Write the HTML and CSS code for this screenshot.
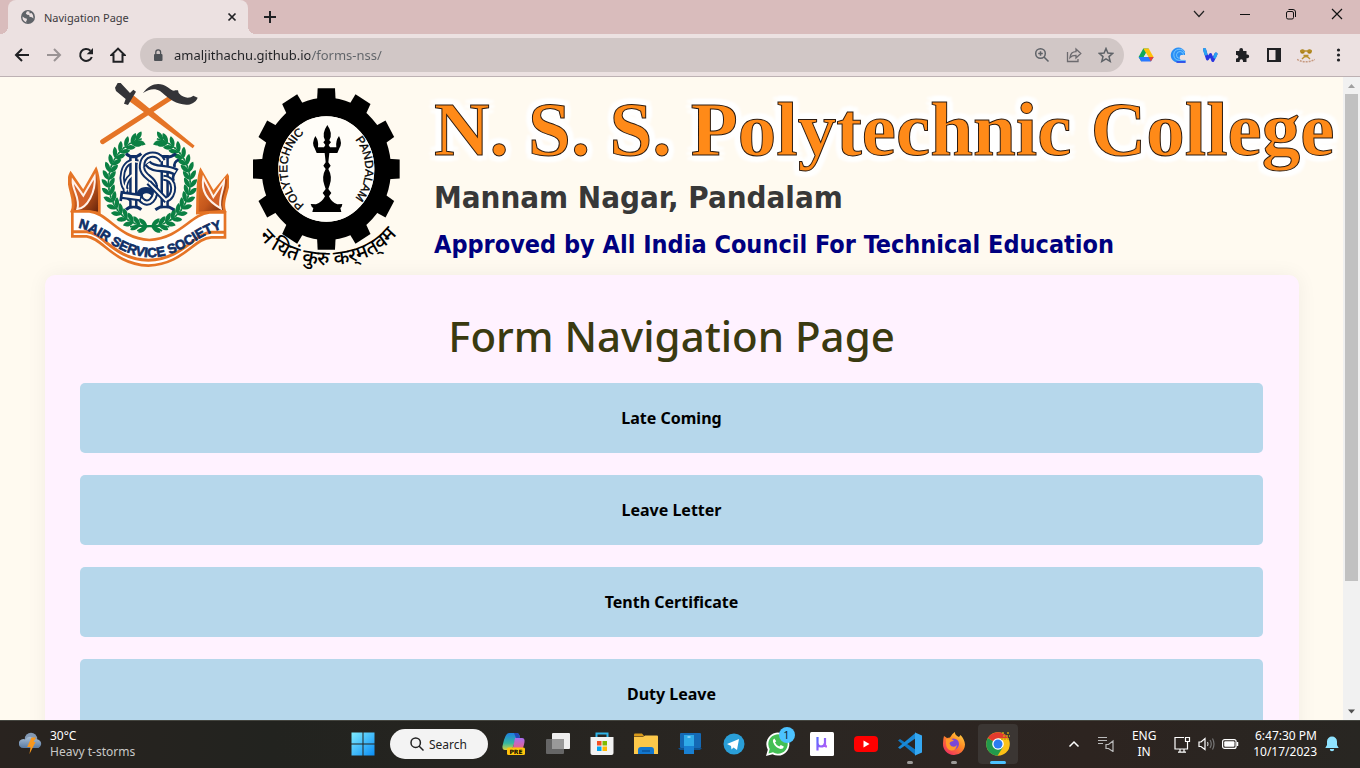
FILE: index.html
```html
<!DOCTYPE html>
<html lang="en">
<head>
<meta charset="utf-8">
<title>Navigation Page</title>
<link rel="stylesheet" href="styles.css">
</head>
<body>
<header class="tabstrip">
  <div class="tab">
    <svg class="favicon" viewBox="0 0 14 14"><circle cx="7" cy="7" r="7" fill="#5f6368"/><path d="M1.5 6.5 4 8.2l1.6.3.4 1.6-1 1.2.6 1.2A6 6 0 0 1 1.5 6.5zM6 1.3 4.8 3.6l1.4 1.2 2 .2.3 1.8 2.4.4 1.6 1.3a6 6 0 0 0-2-5.4L8.6 3.400 8.400 1.500z" fill="#ece1e1"/></svg>
    <span class="tab-title">Navigation Page</span>
    <button class="tab-close" aria-label="Close tab"><svg width="10" height="10" viewBox="0 0 10 10"><path d="M1.500 1.500l7 7M8.500 1.500l-7 7" stroke="#202124" stroke-width="1.700"/></svg></button>
  </div>
  <button class="new-tab" aria-label="New tab"><svg width="12" height="12" viewBox="0 0 12 12"><path d="M6 0v12M0 6h12" stroke="#202124" stroke-width="2"/></svg></button>
  <div class="window-controls">
    <button class="win" aria-label="Search tabs"><svg width="12" height="12" viewBox="0 0 12 12"><path d="M1 3l5 5.500L11 3" fill="none" stroke="#222" stroke-width="1.200"/></svg></button>
    <button class="win" aria-label="Minimize"><svg width="12" height="12" viewBox="0 0 12 12"><path d="M1 6.500h10" stroke="#111"/></svg></button>
    <button class="win" aria-label="Restore"><svg width="12" height="12" viewBox="0 0 12 12"><rect x="1.500" y="3.500" width="7" height="7.500" rx="1.500" fill="none" stroke="#111"/><path d="M3.500 1.500h4.500q2.500 0 2.500 2.500v5" fill="none" stroke="#111"/></svg></button>
    <button class="win" aria-label="Close"><svg width="12" height="12" viewBox="0 0 12 12"><path d="M1 1l10 10M11 1L1 11" stroke="#111" stroke-width="1.200"/></svg></button>
  </div>
</header>

<nav class="toolbar">
  <button class="tool" aria-label="Back"><svg width="16" height="16" viewBox="0 0 16 16"><path d="M15 8H2.500M8 2L2 8l6 6" fill="none" stroke="#202124" stroke-width="2"/></svg></button>
  <button class="tool" aria-label="Forward"><svg width="16" height="16" viewBox="0 0 16 16"><path d="M1 8h12.500M8 2l6 6-6 6" fill="none" stroke="#9a9394" stroke-width="2"/></svg></button>
  <button class="tool" aria-label="Reload"><svg width="16" height="16" viewBox="0 0 16 16"><path d="M13.800 10A6 6 0 1 1 12.400 3.700" fill="none" stroke="#202124" stroke-width="2"/><path d="M15 1v6.300H8.700z" fill="#202124"/></svg></button>
  <button class="tool" aria-label="Home"><svg width="16" height="16" viewBox="0 0 16 16"><path d="M8 1.600L1.500 8h2v6.800h9V8h2z" fill="none" stroke="#202124" stroke-width="2"/></svg></button>
  <div class="omnibox">
    <svg class="lock" viewBox="0 0 10 13"><rect x="1" y="5" width="8.500" height="7" rx="1" fill="#4d5156"/><path d="M2.800 5.500V3.200a2.400 2.400 0 0 1 4.800 0v2.300" fill="none" stroke="#4d5156" stroke-width="1.300"/></svg>
    <input class="address" type="text" aria-label="Address" value="amaljithachu.github.io/forms-nss/">
    <button class="tool" aria-label="Zoom"><svg width="16" height="16" viewBox="0 0 16 16"><g fill="none" stroke="#5f6368" stroke-width="1.500"><circle cx="6.500" cy="6.500" r="4.800"/><path d="M10 10l4.500 4.500M6.500 4.200v4.600M4.200 6.500h4.600"/></g></svg></button>
    <button class="tool" aria-label="Share"><svg width="16" height="16" viewBox="0 0 16 16"><path d="M1.500 5v9.500H12V12M4 10.500c.5-4 3-5.800 6-5.800V2l4.800 4.500L10 11V8.300c-2.500 0-4.500.4-6 2.200z" fill="none" stroke="#6c6a6e" stroke-width="1.300"/></svg></button>
    <button class="tool" aria-label="Bookmark"><svg width="16" height="16" viewBox="0 0 16 16"><path d="M8 1.500l1.900 4.500 4.800.4-3.700 3.200 1.200 4.800L8 11.800l-4.200 2.600L5 9.600 1.300 6.400l4.800-.4z" fill="none" stroke="#5f6368" stroke-width="1.500"/></svg></button>
  </div>
  <div class="extensions">
    <button class="tool" aria-label="Drive"><svg width="16" height="16" viewBox="0 0 16 16"><path d="M5.300 1.500h5.400L8 6.200 3.300 14.500.6 10z" fill="#0fa958"/><path d="M5.300 1.500h5.400l5 8.700h-5.200z" fill="#ffc107"/><path d="M.6 10h0L3.300 14.500h9.600L15.600 10H5.700z" fill="#2979ff"/><path d="M10.500 10h5.100l-2.700 4.500z" fill="#ea4335"/><path d="M8 6l2.300 4H5.700z" fill="#ece1e1"/></svg></button>
    <button class="tool" aria-label="Cloud extension"><svg width="16" height="16" viewBox="0 0 16 16"><path d="M15 4.500A7.600 7.600 0 1 0 8 15.800h7.500V13H11a3 3 0 0 1 0-5h4z" fill="#2a8ff5"/><path d="M14.500 6A5.500 5.500 0 1 0 9 13.300h6M13.500 8A3.500 3.500 0 1 0 9.500 11.500" fill="none" stroke="#86d2ff" stroke-width=".8"/><path d="M6.500 15h9" stroke="#3047e8" stroke-width="1.600"/></svg></button>
    <button class="tool" aria-label="Word helper"><svg width="16" height="16" viewBox="0 0 16 16"><path d="M2.500 2.500L5.500 12l3-4.500 2.300 6L14 7" fill="none" stroke="#2a35e0" stroke-width="3" stroke-linejoin="round" stroke-linecap="round"/><path d="M2.500 2.500l1.300 4.500M12.800 10L14 7" stroke="#28a4f0" stroke-width="3" stroke-linecap="round"/></svg></button>
    <button class="tool" aria-label="Extensions"><svg width="16" height="16" viewBox="0 0 16 16"><path d="M2 4h3.300V3a1.900 1.900 0 0 1 3.800 0v1h3.400v3.400h.8a1.900 1.900 0 0 1 0 3.800h-.8V15H9v-1a1.700 1.700 0 0 0-3.400 0v1H2v-3.400h.6a1.700 1.700 0 0 0 0-3.500H2z" fill="#202124"/></svg></button>
    <button class="tool" aria-label="Side panel"><svg width="16" height="16" viewBox="0 0 16 16"><path d="M1 1h14v14H1zM3 3v10h6.500V3z" fill="#202124" fill-rule="evenodd"/></svg></button>
    <button class="tool" aria-label="Profile"><svg width="18" height="16" viewBox="0 0 18 16"><g fill="#a87f16"><circle cx="5.500" cy="4.500" r="2.300"/><circle cx="12.500" cy="4.500" r="2.300"/></g><path d="M5 12q4-5 8 0M3 4h12M6.500 8.500h5" fill="none" stroke="#b8902a" stroke-width="1.300"/><path d="M0 12.500q9 4.500 18 0" fill="none" stroke="#c69a80" stroke-width="1.500" stroke-dasharray="2 1"/></svg></button>
    <button class="tool" aria-label="Menu"><svg width="16" height="16" viewBox="0 0 16 16"><g fill="#202124"><circle cx="8.500" cy="3" r="1.600"/><circle cx="8.500" cy="8" r="1.600"/><circle cx="8.500" cy="13" r="1.600"/></g></svg></button>
  </div>
</nav>

<div class="viewport">
  <main class="page">
    <section class="banner">
      <svg class="emblem" viewBox="54 21 483 555" role="img" aria-label="Nair Service Society">
        <defs>
          <linearGradient id="fold" x1="0" y1="0" x2="1" y2="1"><stop offset="0" stop-color="#ee7a2c"/><stop offset=".55" stop-color="#c4571c"/><stop offset="1" stop-color="#5e1f0a"/></linearGradient>
          <path id="leaf" d="M-2-1C6-16 20-17 27-14C25-4 12 4-2-1z" fill="#0b8043"/>
          <g id="sprig"><g transform="translate(0 -122)"><use href="#leaf" transform="rotate(-12)"/><use href="#leaf" transform="scale(1 -1) rotate(-12)"/><path d="M-8 0H18" stroke="#0b8043" stroke-width="4"/></g></g>
          <g id="branch">
            <use href="#sprig" transform="rotate(184)"/><use href="#sprig" transform="rotate(194)"/><use href="#sprig" transform="rotate(204)"/><use href="#sprig" transform="rotate(214)"/><use href="#sprig" transform="rotate(224)"/><use href="#sprig" transform="rotate(234)"/><use href="#sprig" transform="rotate(244)"/><use href="#sprig" transform="rotate(254)"/><use href="#sprig" transform="rotate(264)"/><use href="#sprig" transform="rotate(274)"/><use href="#sprig" transform="rotate(284)"/><use href="#sprig" transform="rotate(294)"/><use href="#sprig" transform="rotate(304)"/><use href="#sprig" transform="rotate(314)"/><use href="#sprig" transform="rotate(324)"/><use href="#sprig" transform="rotate(334)"/><use href="#sprig" transform="rotate(341)"/>
          </g>
          <path id="motto" d="M76 458C140 460 195 542 300 547C400 545 445 474 524 460"/>
        </defs>
        <path d="M158 200L372 62" stroke="#e57426" stroke-width="15" stroke-linecap="round"/>
        <path d="M240 65L252 62L434 212L428 220L240 80z" fill="#e57426"/>
        <path d="M195 38L203 24L212 24L240 54L250 44L258 50L250 64L234 90L222 86L227 72L198 48z" fill="#343438"/>
        <path d="M279 54C300 24 330 20 352 36C364 44 370 50 376 46L384 46L386 54C402 72 420 70 430 62L443 68C436 86 416 92 398 88C370 84 350 64 330 48C312 38 296 44 279 54z" fill="#343438"/>
        <g transform="translate(298 322) scale(1 1.080)"><use href="#branch"/><use href="#branch" transform="scale(-1 1)"/></g>
        <path d="M262 468Q300 440 336 468M240 455Q300 450 358 455" fill="none" stroke="#0b8043" stroke-width="5"/>
        <g fill="none">
          <g stroke="#0f2f66">
            <path d="M264 262C214 244 204 330 232 346M246 300C214 326 222 372 254 376" stroke-width="16"/>
            <path d="M250 240V400M344 240V400" stroke-width="25"/>
            <path d="M228 236Q250 256 274 236M228 404Q250 384 274 404M320 236Q350 258 378 236M316 404Q344 384 372 404" stroke-width="9"/>
          </g>
          <g stroke="#fffaf0">
            <path d="M264 262C214 244 204 330 232 346M246 300C214 326 222 372 254 376" stroke-width="5"/>
            <path d="M250 250V392M344 250V392" stroke-width="10"/>
          </g>
          <path d="M338 258C324 228 274 232 276 278C278 306 310 308 314 332C322 368 296 400 272 372C258 342 300 336 316 362" stroke="#0f2f66" stroke-width="19"/>
          <path d="M338 258C324 228 274 232 276 278C278 306 310 308 314 332C322 368 296 400 272 372" stroke="#fffaf0" stroke-width="7"/>
          <path d="M296 322L350 378M340 308C380 310 376 366 348 374" stroke="#0f2f66" stroke-width="18"/>
          <path d="M296 322L350 378M340 308C380 310 376 366 348 374" stroke="#fffaf0" stroke-width="6"/>
          <path d="M292 264C310 288 350 274 380 292M212 360L274 368" stroke="#0f2f66" stroke-width="23"/>
          <path d="M294 266C310 288 350 274 376 290M216 361L270 368" stroke="#fffaf0" stroke-width="9"/>
          <path d="M374 276Q370 262 386 254M372 296Q366 312 372 318M216 348L212 378" stroke="#0f2f66" stroke-width="8"/>
        </g>
        <path d="M62 295L100 350L138 283C150 315 148 360 148 414L66 408C82 372 44 330 62 295z" fill="url(#fold)" stroke="#e57426" stroke-width="8"/>
        <path d="M68 316L100 362L134 304C138 350 112 400 82 402C92 370 66 345 68 316z" fill="#d4622a" stroke="#fff1ea" stroke-width="6"/>
        <path d="M532 302L490 352L452 286C440 320 444 360 442 414L524 408C510 372 548 330 532 302z" fill="url(#fold)" stroke="#e57426" stroke-width="8"/>
        <path d="M522 318L490 366L460 308C452 350 476 380 512 400C504 370 522 345 522 318z" fill="#d4622a" stroke="#fff1ea" stroke-width="6"/>
        <path d="M67 409H118C175 414 205 490 298 495C390 490 420 420 478 412H525V487H484C430 490 400 568 295 572C190 568 160 490 110 484H67z" fill="#fff" stroke="#e57426" stroke-width="8"/>
        <path d="M67 470H110C160 474 190 552 295 556C400 552 430 476 484 472H525" fill="none" stroke="#e57426" stroke-width="9"/>
        <text class="emblem-text"><textPath href="#motto" startOffset="50%" text-anchor="middle">NAIR SERVICE SOCIETY</textPath></text>
      </svg>
      <svg class="gear" viewBox="39 21 438 576" role="img" aria-label="Polytechnic Pandalam">
        <defs>
          <path id="rim" d="M259 412A117 130 0 0 1 259 152A117 130 0 0 1 259 412"/>
          <path id="under" d="M38 456C110 602 396 618 490 450"/>
          <path id="tooth" d="M-28-185L-26-220H26L28-185z"/>
        </defs>
        <g transform="translate(259 282) scale(1 1.100)">
          <circle r="169" fill="none" stroke="#000" stroke-width="50"/>
          <use href="#tooth"/><use href="#tooth" transform="rotate(30)"/><use href="#tooth" transform="rotate(60)"/><use href="#tooth" transform="rotate(90)"/><use href="#tooth" transform="rotate(120)"/><use href="#tooth" transform="rotate(150)"/><use href="#tooth" transform="rotate(180)"/><use href="#tooth" transform="rotate(210)"/><use href="#tooth" transform="rotate(240)"/><use href="#tooth" transform="rotate(270)"/><use href="#tooth" transform="rotate(300)"/><use href="#tooth" transform="rotate(330)"/>
          <circle r="144" fill="#fffdf8"/>
        </g>
        <text class="gear-text"><textPath href="#rim" startOffset="25%" text-anchor="middle">POLYTECHNIC</textPath></text>
        <text class="gear-text"><textPath href="#rim" startOffset="75%" text-anchor="middle">PANDALAM</textPath></text>
        <text class="gear-motto"><textPath href="#under" startOffset="50%" text-anchor="middle">न यितं कुरु कर्‌मत्‌वम</textPath></text>
        <path d="M262 150Q244 176 255 196L250 202L256 210L252 217H234Q237 198 226 183Q214 204 224 220L230 234H254L257 262L250 272L257 282Q244 305 253 330L257 342L248 354L255 364Q246 382 228 388L212 387Q214 396 220 399L217 411H304L301 399Q306 396 307 387L292 388Q274 382 267 364L274 354L265 342L269 330Q278 305 265 282L272 272L265 262L268 234H292L298 220Q308 204 297 183Q286 198 289 217H270L266 210L273 202L268 196Q280 176 262 150z"/>
      </svg>
      <div class="banner-text">
        <h1 class="college">N. S. S. Polytechnic College</h1>
        <p class="place">Mannam Nagar, Pandalam</p>
        <p class="approval">Approved by All India Council For Technical Education</p>
      </div>
    </section>
    <section class="card">
      <h2 class="card-title">Form Navigation Page</h2>
      <div class="links">
        <button class="form-link">Late Coming</button>
        <button class="form-link">Leave Letter</button>
        <button class="form-link">Tenth Certificate</button>
        <button class="form-link">Duty Leave</button>
      </div>
    </section>
  </main>
  <div class="scrollbar">
    <svg width="17" height="17" viewBox="0 0 17 17"><path d="M5 11L8.500 7L12 11z" fill="#a0a0a0"/></svg>
    <div class="track"><div class="thumb"></div></div>
    <svg width="17" height="17" viewBox="0 0 17 17"><path d="M5 6.500L8.500 10.500L12 6.500z" fill="#505050"/></svg>
  </div>
</div>

<footer class="taskbar">
  <div class="weather">
    <svg width="24" height="24" viewBox="0 0 24 24"><defs><linearGradient id="cl" x2="0" y2="1"><stop offset="0" stop-color="#a9bfd6"/><stop offset="1" stop-color="#5a7ba3"/></linearGradient></defs><circle cx="12" cy="7" r="6.200" fill="#8298b3"/><path d="M4.500 16a4.500 4.500 0 1 1 2-8.400 5 5 0 0 1 9 0A4.500 4.500 0 1 1 19.500 16z" fill="url(#cl)"/><path d="M12.500 5.500h4.500L14.500 10h2L10.500 22l1-7H8.200z" fill="#f8971d"/></svg>
    <div class="weather-text"><span>30°C</span><span class="dim">Heavy t-storms</span></div>
  </div>
  <div class="apps">
    <button class="app" aria-label="Start"><svg width="24" height="24" viewBox="0 0 24 24"><defs><linearGradient id="wn" x2="1" y2="1"><stop offset="0" stop-color="#7fecff"/><stop offset="1" stop-color="#0a8df5"/></linearGradient></defs><path d="M.5.5h11v11H.5zM12.500.5h11v11h-11zM.5 12.500h11v11H.5zM12.500 12.500h11v11h-11z" fill="url(#wn)"/></svg></button>
    <button class="search"><svg width="14" height="14" viewBox="0 0 14 14"><circle cx="5.700" cy="5.700" r="4.700" fill="none" stroke="#222" stroke-width="1.500"/><path d="M9 9l4.500 4.500" stroke="#222" stroke-width="1.500"/></svg>Search</button>
    <button class="app" aria-label="Copilot"><svg width="24" height="24" viewBox="0 0 24 24"><defs><linearGradient id="c1" x2="0" y2="1"><stop offset="0" stop-color="#1d7fe0"/><stop offset=".6" stop-color="#35b7a0"/><stop offset="1" stop-color="#d9d23c"/></linearGradient><linearGradient id="c2" x2="0" y2="1"><stop offset="0" stop-color="#a76cf0"/><stop offset="1" stop-color="#f0607c"/></linearGradient></defs><path d="M7 1h8q2 0 3 4l-4 1-3 9q-1 3-3 3H3q-3 0-2.500-4Q3 1 7 1z" fill="url(#c1)"/><path d="M13 6h7q3 0 2.500 4-1 6-3 8h-9z" fill="url(#c2)"/><path d="M12 1h3q2 0 3 5h-4z" fill="#2449b8"/><rect x="5" y="15.500" width="18" height="7.500" rx="1.500" fill="#ffc40c"/><text x="14" y="21.500" text-anchor="middle" class="pre">PRE</text></svg></button>
    <button class="app" aria-label="Task view"><svg width="24" height="24" viewBox="0 0 24 24"><rect x="6" y="1" width="18" height="16" rx="1" fill="#eee"/><rect x="0" y="7" width="18" height="15" rx="1" fill="#666"/><path d="M6 7h12v10H6z" fill="#999"/></svg></button>
    <button class="app" aria-label="Store"><svg width="24" height="24" viewBox="0 0 24 24"><path d="M6.500 5V1.500h11V5" fill="none" stroke="#2fb4e8" stroke-width="2"/><path d="M.5 5h23v16q0 2-2 2h-19q-2 0-2-2z" fill="#f2f2f2"/><path d="M7 9h4.500v4.500H7z" fill="#f25022"/><path d="M12.500 9H17v4.500h-4.500z" fill="#7fba00"/><path d="M7 14.500h4.500V19H7z" fill="#00a4ef"/><path d="M12.500 14.500H17V19h-4.500z" fill="#ffb900"/></svg></button>
    <button class="app" aria-label="File Explorer"><svg width="24" height="24" viewBox="0 0 24 24"><path d="M0 2.500q0-1 1-1h7l2.500 3H0z" fill="#d99a1a"/><path d="M0 5h9l2-1.500h12q1 0 1 1V22H0z" fill="#fcc84a"/><path d="M4 22v-4q0-3 3-3h10q3 0 3 3v4z" fill="#1277cf"/><path d="M8 19h8" stroke="#0b559c" stroke-width="1.500"/></svg></button>
    <button class="app" aria-label="Phone Link"><svg width="24" height="24" viewBox="0 0 24 24"><rect x="2" y="1" width="21" height="15" rx="1" fill="#1469b5"/><path d="M0 16h24l-2 2H2z" fill="#0e5290"/><path d="M6 3h10v19H6z" fill="#2faae8"/><path d="M6 14h10v8H6z" fill="#1980d2"/><path d="M9.500 5h3" stroke="#d5f2ff" stroke-width="1"/></svg></button>
    <button class="app" aria-label="Telegram"><svg width="24" height="24" viewBox="0 0 24 24"><circle cx="12" cy="12" r="10.500" fill="#2a9fd8"/><path d="M5 12l12-5-2 11-3.500-2.500-2 2-.5-3.500z" fill="#fff"/></svg></button>
    <button class="app whatsapp" aria-label="WhatsApp"><svg width="24" height="24" viewBox="0 0 24 24"><path d="M0 24l1.800-6.300A11.500 11.500 0 1 1 6.500 22.300z" fill="#fff"/><path d="M2.500 21.500l1.200-4.500A9.700 9.700 0 1 1 7 20.300z" fill="#44bf55"/><path d="M8.300 6.500q-2 1-1.300 3.500 2 5.500 7.500 7 3 0 3.300-2.500l-3-1.500-1.500 1.500q-3-1-4.300-4l1.200-1.300z" fill="#fff"/></svg><span class="badge">1</span></button>
    <button class="app" aria-label="uTorrent"><svg width="24" height="24" viewBox="0 0 24 24"><defs><linearGradient id="mu" x2="1" y2="1"><stop offset="0" stop-color="#5468ff"/><stop offset="1" stop-color="#c95cf5"/></linearGradient></defs><rect width="24" height="24" rx="1.500" fill="#fff"/><path d="M7.500 5v13.500M7.500 6v5q0 3.500 3.500 3.500t4-3.500V6v7q0 1.500 2 1.500" fill="none" stroke="url(#mu)" stroke-width="2.200"/></svg></button>
    <button class="app" aria-label="YouTube"><svg width="24" height="24" viewBox="0 0 24 24"><rect y="4" width="24" height="16" rx="4" fill="#f00"/><path d="M9.500 8.500l6 3.500-6 3.500z" fill="#fff"/></svg></button>
    <button class="app running" aria-label="Visual Studio Code"><svg width="24" height="24" viewBox="0 0 24 24"><path d="M0 8.500L2 7l16 11v5.500z" fill="#0f78c4"/><path d="M0 15.500L2 17 18 6V.5z" fill="#1a8ad8"/><path d="M17 .5l7 3v17l-7 3z" fill="#35a8f2"/></svg></button>
    <button class="app running" aria-label="Firefox"><svg width="24" height="24" viewBox="0 0 24 24"><defs><linearGradient id="ff" x1="1" y1="0" x2=".3" y2="1"><stop offset="0" stop-color="#ffe14a"/><stop offset=".5" stop-color="#ff8a24"/><stop offset="1" stop-color="#f0325e"/></linearGradient></defs><path d="M2 4l3 2 3-.5q2-4 5-5.500-.5 3 4 5l1.500-2q4 4 4.500 9.500a11 11 0 1 1-22-1Q1 7 2 4z" fill="url(#ff)"/><circle cx="11.500" cy="12" r="5.500" fill="#7a48d8"/><path d="M4 7q6-1 8 2-4 0-4.500 2.500L9 14q4 2 6-1-1 6-6 5.500-5-1-5-7z" fill="#ff9a28"/></svg></button>
    <button class="app active" aria-label="Chrome"><svg width="24" height="24" viewBox="0 0 24 24"><circle cx="12" cy="12" r="11.800" fill="#fbc116"/><path d="M1.800 6A11.800 11.800 0 0 0 11.500 23.800L17 15l-5-3z" fill="#229a4c"/><path d="M12 12L1.800 6A11.800 11.800 0 0 1 22.200 6.200H12z" fill="#e33b2e"/><circle cx="12" cy="12" r="5.800" fill="#fff"/><circle cx="12" cy="12" r="4.500" fill="#2b7cf0"/><path d="M16 1h3M21 1h3M17 4h7M15 7h8" stroke="#c9a012" stroke-width="1.700" stroke-dasharray="2 1"/></svg></button>
  </div>
  <div class="tray">
    <button class="tray-icon" aria-label="Hidden icons"><svg width="12" height="12" viewBox="0 0 12 12"><path d="M1.500 8.500L6 4l4.500 4.500" fill="none" stroke="#fff" stroke-width="1.500"/></svg></button>
    <button class="tray-icon" aria-label="Audio"><svg width="16" height="16" viewBox="0 0 16 16"><path d="M0 1.500h9M0 4.500h9M0 7.500h5M8 8.500h2.500L15 5v10.500l-4.500-3H8z" fill="none" stroke="#bbb" stroke-width="1.200"/></svg></button>
    <button class="lang"><span>ENG</span><span>IN</span></button>
    <button class="status" aria-label="Network, volume and battery">
      <svg width="17" height="17" viewBox="0 0 17 17"><path d="M10 1.500H1v11.500h12.500V9M4 16.200h8M6 13v3M10 13v3M11.500 1.500h4v4h-4zM13.500 6v6" fill="none" stroke="#fff" stroke-width="1.200"/></svg>
      <svg width="17" height="14" viewBox="0 0 17 14"><path d="M1 5h2L7 1.500v11L3 9.500H1z" fill="none" stroke="#fff" stroke-width="1.200"/><path d="M9.500 5q1 2 0 4" fill="none" stroke="#ccc" stroke-width="1.200"/><path d="M12 3q2.500 4 0 8M14.500 1.500q3 5.500 0 11" fill="none" stroke="#777" stroke-width="1.200"/></svg>
      <svg width="17" height="10" viewBox="0 0 17 10"><rect x=".6" y=".6" width="13.500" height="8.800" rx="2" fill="none" stroke="#fff" stroke-width="1.200"/><rect x="2.200" y="2.200" width="10.300" height="5.600" rx="1" fill="#fff"/><path d="M15.500 3v4" stroke="#fff" stroke-width="1.500"/></svg>
    </button>
    <button class="clock"><span>6:47:30 PM</span><span>10/17/2023</span></button>
    <button class="bell" aria-label="Notifications"><svg width="14" height="16" viewBox="0 0 14 16"><path d="M7 .5a5 5 0 0 1 5 5V9l1.700 3H.3L2 9V5.500a5 5 0 0 1 5-5zM4.800 13h4.400a2.200 2.200 0 0 1-4.400 0z" fill="#8fe3ff"/></svg></button>
  </div>
</footer>
</body>
</html>
```

FILE: styles.css
```css
* { box-sizing: border-box; }

body {
  margin: 0;
  height: 100vh;
  display: flex;
  flex-direction: column;
  overflow: hidden;
  font-family: "Noto Sans", "Open Sans", sans-serif;
  font-size: 12px;
}

button {
  border: 0;
  padding: 0;
  margin: 0;
  background: none;
  font: inherit;
  color: inherit;
}

svg { display: block; flex: none; }

/* Tab strip */
.tabstrip {
  display: flex;
  flex: none;
  height: 34px;
  padding-left: 8px;
  background: #d9bcbc;
}

.tab {
  position: relative;
  display: flex;
  align-items: center;
  width: 240px;
  padding: 0 11px 0 13px;
  border-radius: 8px 8px 0 0;
  background: #ece1e1;
  color: #3c3a3d;
}

.tab::before,
.tab::after {
  content: "";
  position: absolute;
  bottom: 0;
  width: 8px;
  height: 8px;
}

.tab::before {
  left: -8px;
  background: radial-gradient(circle at 0 0, transparent 8px, #ece1e1 8px);
}

.tab::after {
  right: -8px;
  background: radial-gradient(circle at 100% 0, transparent 8px, #ece1e1 8px);
}

.favicon { width: 14px; height: 14px; }
.tab-title { flex: 1; margin-left: 9px; font-size: 11px; }
.new-tab { width: 44px; display: grid; place-items: center; }

.window-controls { display: flex; margin-left: auto; }
.win { width: 46px; height: 28px; display: grid; place-items: center; }

/* Toolbar */
.toolbar {
  display: flex;
  flex: none;
  align-items: center;
  height: 43px;
  padding: 0 6px;
  border-bottom: 1px solid #bdb1b3;
  background: #ece1e1;
}

.tool { flex: none; width: 32px; height: 32px; display: grid; place-items: center; }

.omnibox {
  display: flex;
  flex: 1;
  align-items: center;
  height: 34px;
  margin: 0 6px;
  padding: 0 2px 0 13px;
  border-radius: 17px;
  background: #d1c7c6;
}

.lock { width: 10px; height: 13px; }

.address {
  flex: 1;
  min-width: 0;
  margin-left: 11px;
  padding: 0;
  border: 0;
  outline: 0;
  font: 13px "Noto Sans", sans-serif;
  color: transparent;
  background: linear-gradient(90deg, #202124 136px, #5f6368 136px);
  -webkit-background-clip: text;
  background-clip: text;
}

.extensions { display: flex; }

/* Page */
.viewport { display: flex; flex: 1; min-height: 0; }

.page {
  flex: 1;
  min-width: 0;
  overflow: hidden;
  background: #fffaf0;
}

.banner {
  display: flex;
  align-items: flex-start;
  height: 198px;
  padding: 5px 0 0 68px;
}

.emblem { width: 161px; height: 185px; }
.gear { width: 146px; height: 192px; margin-left: 24px; overflow: visible; }

.emblem-text { font: bold 40px "Liberation Sans", sans-serif; fill: #0f2f66; stroke: #0f2f66; stroke-width: 2px; }
.gear-text { font: 35px "Liberation Sans", sans-serif; stroke: #000; stroke-width: 1px; }
.gear-motto { font: 500 60px "Noto Sans Devanagari", "Noto Sans", sans-serif; }

.banner-text { margin-left: 35px; padding-top: 7px; white-space: nowrap; }
.banner-text p { margin: 8px 0 0; line-height: 40px; font-weight: bold; }

.college {
  margin: 0;
  font: bold 77px/80px "Liberation Serif", serif;
  color: #ff8a18;
  -webkit-text-stroke: 1px #2a1a10;
  text-shadow:
    6px 0 3px #fff, -6px 0 3px #fff, 0 6px 3px #fff, 0 -6px 3px #fff,
    5px 5px 3px #fff, -5px 5px 3px #fff, 5px -5px 3px #fff, -5px -5px 3px #fff;
}

.place { font-family: "DejaVu Sans Condensed", "DejaVu Sans", sans-serif; font-size: 31px; color: #383838; }
.approval { font-family: "DejaVu Sans Condensed", "DejaVu Sans", sans-serif; font-size: 25px; color: #00007f; }

.card {
  margin: 0 44px 0 45px;
  padding: 31px 36px 40px 35px;
  border-radius: 10px;
  background: #fff2ff;
  box-shadow: 0 0 20px rgba(0, 0, 0, 0.06);
}

.card-title {
  margin: 0 0 17px;
  font-size: 42px;
  line-height: 60px;
  font-weight: 500;
  text-align: center;
  color: #3a3a10;
}

.links { display: grid; gap: 22px; }

.form-link {
  height: 70px;
  border-radius: 5px;
  background: #b6d7eb;
  color: #000;
  font-size: 16px;
  font-weight: bold;
}

/* Scrollbar */
.scrollbar { display: flex; flex: none; flex-direction: column; width: 17px; background: #f1f1f1; }
.track { flex: 1; padding: 0 2px; }
.thumb { height: 80%; background: #c1c1c1; }

/* Taskbar */
.taskbar {
  display: grid;
  flex: none;
  grid-template-columns: 1fr auto 1fr;
  height: 48px;
  box-shadow: inset 0 1px #44453f;
  background: linear-gradient(90deg, #29231f, #22231f 20%, #2b2622 60%, #2d2420 80%, #282622);
  color: #fff;
}

.weather { display: flex; align-items: center; gap: 7px; padding-left: 19px; }
.weather-text { display: flex; flex-direction: column; line-height: 16px; }
.dim { color: #c9c9c7; }

.apps { display: flex; align-items: center; }
.app { position: relative; width: 44px; height: 40px; display: grid; place-items: center; }

.search {
  display: flex;
  align-items: center;
  justify-content: center;
  gap: 5px;
  width: 98px;
  height: 30px;
  margin: 0 4px 0 5px;
  border-radius: 15px;
  background: #f3f3f3;
  color: #222;
}

.pre { font: bold 6px "DejaVu Sans", sans-serif; }

.badge {
  position: absolute;
  top: 3px;
  right: 5px;
  width: 16px;
  height: 16px;
  border-radius: 50%;
  background: #4cc2ff;
  color: #123;
  font-size: 11px;
  line-height: 16px;
}

.running::after,
.active::after {
  content: "";
  position: absolute;
  bottom: 0;
  left: 50%;
  width: 6px;
  height: 3px;
  margin-left: -3px;
  border-radius: 2px;
  background: #9c9a98;
}

.active { width: 40px; margin: 0 2px; border-radius: 4px; background: #3b3633; }
.active::after { width: 16px; margin-left: -8px; background: #4cc2ff; }

.tray { display: flex; align-items: center; justify-content: flex-end; padding-right: 21px; }
.tray-icon { width: 32px; height: 40px; display: grid; place-items: center; }
.lang, .clock { display: flex; flex-direction: column; line-height: 16px; }
.lang { width: 44px; align-items: center; }
.status { display: flex; align-items: center; gap: 7px; padding: 0 14px 0 8px; }
.clock { align-items: flex-end; }
.bell { margin-left: 8px; }
```
